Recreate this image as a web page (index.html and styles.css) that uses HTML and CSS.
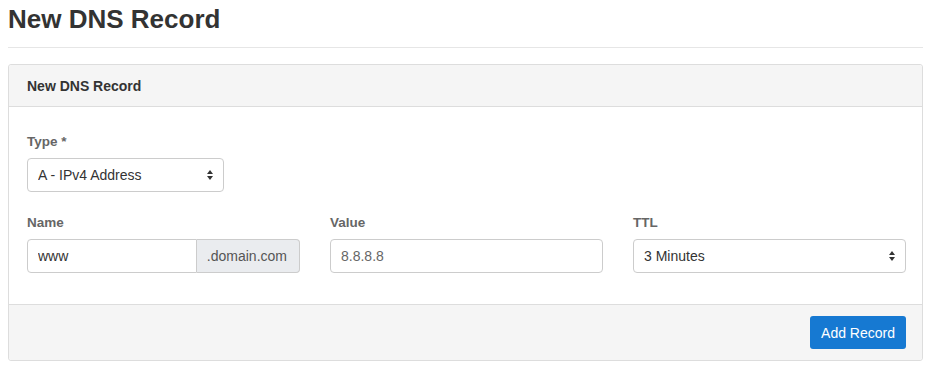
FILE: index.html
```html
<!DOCTYPE html>
<html lang="en">
<head>
    <meta charset="UTF-8">
    <meta name="viewport" content="width=device-width, initial-scale=1.0">
    <title>New DNS Record</title>
    <link rel="stylesheet" href="styles.css">
</head>
<body>
    <div class="page">
        <h1 class="page-title">New DNS Record</h1>

        <form class="panel" action="/dns/records" method="post">
            <div class="panel-heading">New DNS Record</div>

            <div class="panel-body">
                <div class="field field-type">
                    <label for="type">Type *</label>
                    <div class="select-wrap">
                        <select id="type" name="type">
                            <option>A - IPv4 Address</option>
                        </select>
                    </div>
                </div>

                <div class="row">
                    <div class="field">
                        <label for="name">Name</label>
                        <div class="input-group">
                            <input type="text" id="name" name="name" value="www">
                            <span class="addon">.domain.com</span>
                        </div>
                    </div>
                    <div class="field">
                        <label for="value">Value</label>
                        <input type="text" id="value" name="value" placeholder="8.8.8.8">
                    </div>
                    <div class="field">
                        <label for="ttl">TTL</label>
                        <div class="select-wrap">
                            <select id="ttl" name="ttl">
                                <option>3 Minutes</option>
                            </select>
                        </div>
                    </div>
                </div>
            </div>

            <div class="panel-footer">
                <button type="submit">Add Record</button>
            </div>
        </form>
    </div>
</body>
</html>
```

FILE: styles.css
```css
body {
    font-family: "Liberation Sans", Arial, sans-serif;
    font-size: 14px;
    color: #333;
    background-color: #fff;
    margin: 0;
}
.page {
    width: 915px;
    margin: 0 0 0 8px;
}
.page-title {
    font-size: 26px;
    font-weight: 700;
    margin: 0;
    padding: 5px 0 14px;
    line-height: 28px;
    border-bottom: 1px solid #e6e6e6;
}
.panel {
    margin-top: 16px;
    border: 1px solid #ddd;
    border-radius: 3px;
    background-color: #fff;
}
.panel-heading {
    background-color: #f5f5f5;
    border-bottom: 1px solid #ddd;
    padding: 13px 18px 12px;
    font-weight: 700;
    font-size: 14px;
    line-height: 16px;
    border-radius: 3px 3px 0 0;
}
.panel-body {
    padding: 27px 16px 31px 18px;
}
.row {
    display: grid;
    grid-template-columns: repeat(3, 1fr);
    gap: 30px;
}
.field-type {
    width: 197px;
    margin-bottom: 23px;
}
label {
    display: block;
    font-weight: 700;
    font-size: 13.5px;
    color: #666;
    line-height: 16px;
    margin-bottom: 8px;
}
input[type="text"], select {
    display: block;
    width: 100%;
    box-sizing: border-box;
    height: 34px;
    padding: 0 10px;
    font-family: inherit;
    font-size: 14px;
    color: #555;
    background-color: #fff;
    border: 1px solid #ccc;
    border-radius: 4px;
    outline: none;
}
input::placeholder {
    color: #666;
}
select {
    appearance: none;
    -webkit-appearance: none;
    padding-right: 24px;
    color: #333;
}
.select-wrap {
    position: relative;
}
.select-wrap::after {
    content: "";
    position: absolute;
    right: 11px;
    top: 12px;
    width: 0;
    height: 0;
    border-left: 3px solid transparent;
    border-right: 3px solid transparent;
    border-bottom: 4px solid #333;
    pointer-events: none;
}
.select-wrap::before {
    content: "";
    position: absolute;
    right: 11px;
    top: 18px;
    width: 0;
    height: 0;
    border-left: 3px solid transparent;
    border-right: 3px solid transparent;
    border-top: 4px solid #333;
    pointer-events: none;
}
.input-group {
    display: flex;
}
.input-group input {
    flex: 1;
    min-width: 0;
    border-radius: 4px 0 0 4px;
    color: #333;
}
.addon {
    display: flex;
    align-items: center;
    padding: 0 12px 0 10px;
    background-color: #eaecef;
    border: 1px solid #ccc;
    border-left: none;
    border-radius: 0 4px 4px 0;
    color: #555;
    white-space: nowrap;
}
.panel-footer {
    display: flex;
    justify-content: flex-end;
    background-color: #f5f5f5;
    border-top: 1px solid #ddd;
    padding: 11px 16px 11px;
    border-radius: 0 0 3px 3px;
}
button {
    background-color: #1679d2;
    color: #fff;
    border: none;
    border-radius: 3px;
    height: 33px;
    padding: 0 11px;
    font-family: inherit;
    font-size: 14px;
    cursor: pointer;
}
```
